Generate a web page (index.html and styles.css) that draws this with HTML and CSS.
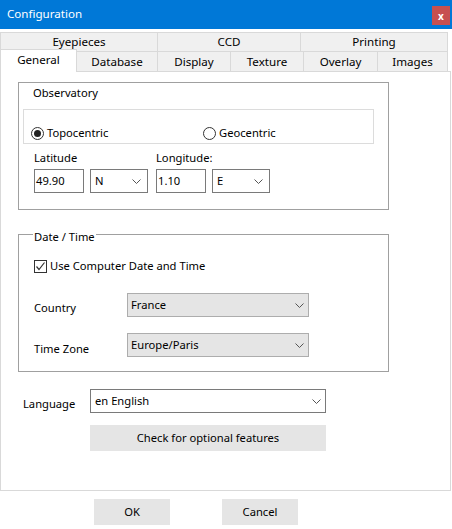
FILE: index.html
```html
<!DOCTYPE html>
<html lang="en">
<head>
  <meta charset="UTF-8">
  <title>Configuration</title>
  <link rel="stylesheet" href="styles.css">
</head>
<body>
  <div class="window">
    <!-- Title bar -->
    <div class="titlebar">
      <span class="title">Configuration</span>
      <span class="close">x</span>
    </div>

    <!-- Tabs (two rows) -->
    <div class="tabs">
      <div class="tab-row row-top">
        <div class="tab first">Eyepieces</div>
        <div class="tab">CCD</div>
        <div class="tab">Printing</div>
      </div>
      <div class="tab-row row-bottom">
        <div class="tab first selected">General</div>
        <div class="tab">Database</div>
        <div class="tab">Display</div>
        <div class="tab">Texture</div>
        <div class="tab">Overlay</div>
        <div class="tab">Images</div>
      </div>
    </div>

    <!-- General page -->
    <div class="panel">
      <div class="group observatory">
        <div class="group-title">Observatory</div>
        <div class="radio-box">
          <label class="radio-item wide"><span class="radio checked"></span>Topocentric</label>
          <label class="radio-item"><span class="radio"></span>Geocentric</label>
        </div>
        <div class="coords">
          <div class="coord lat">
            <div class="coord-label">Latitude</div>
            <div class="coord-inputs">
              <div class="textbox">49.90</div>
              <div class="combo small"><span>N</span><svg class="chevron" width="9" height="5" viewBox="0 0 9 5"><polyline points="0.5,0.5 4.5,4.5 8.5,0.5"/></svg></div>
            </div>
          </div>
          <div class="coord">
            <div class="coord-label">Longitude:</div>
            <div class="coord-inputs">
              <div class="textbox">1.10</div>
              <div class="combo small"><span>E</span><svg class="chevron" width="9" height="5" viewBox="0 0 9 5"><polyline points="0.5,0.5 4.5,4.5 8.5,0.5"/></svg></div>
            </div>
          </div>
        </div>
      </div>

      <div class="group datetime">
        <div class="legend">Date / Time</div>
        <label class="check-row">
          <span class="checkbox"><svg width="11" height="11" viewBox="0 0 11 11"><polyline points="1.5,5.5 4,8.5 9.5,1.5"/></svg></span>
          Use Computer Date and Time
        </label>
        <div class="form-row">
          <span class="form-label">Country</span>
          <div class="combo flat"><span>France</span><svg class="chevron" width="9" height="5" viewBox="0 0 9 5"><polyline points="0.5,0.5 4.5,4.5 8.5,0.5"/></svg></div>
        </div>
        <div class="form-row">
          <span class="form-label">Time Zone</span>
          <div class="combo flat"><span>Europe/Paris</span><svg class="chevron" width="9" height="5" viewBox="0 0 9 5"><polyline points="0.5,0.5 4.5,4.5 8.5,0.5"/></svg></div>
        </div>
      </div>

      <div class="language-row">
        <span class="language-label">Language</span>
        <div class="combo language"><span>en English</span><svg class="chevron" width="9" height="5" viewBox="0 0 9 5"><polyline points="0.5,0.5 4.5,4.5 8.5,0.5"/></svg></div>
      </div>
      <button class="btn features">Check for optional features</button>
    </div>

    <!-- Dialog buttons -->
    <div class="dialog-buttons">
      <button class="btn dialog">OK</button>
      <button class="btn dialog">Cancel</button>
    </div>
  </div>
</body>
</html>
```

FILE: styles.css
```css
* {
  box-sizing: border-box;
  margin: 0;
  padding: 0;
}

body {
  font-family: "Noto Sans", "Open Sans", sans-serif;
  font-size: 11.2px;
  color: #000;
  background: #fff;
}

.window {
  width: 452px;
  height: 529px;
  background: #fff;
}

/* Title bar */
.titlebar {
  height: 29px;
  background-color: #0078d7;
  color: #fff;
  display: flex;
  align-items: center;
  justify-content: space-between;
  padding: 0 2px 0 7px;
}

.title {
  font-size: 11.6px;
  line-height: 16px;
  margin-top: -1px;
}

.close {
  width: 18px;
  height: 19px;
  margin-top: 2px;
  background-color: #c75050;
  color: #fff;
  font-size: 10px;
  font-weight: bold;
  display: flex;
  align-items: center;
  justify-content: center;
}

/* Tabs */
.tabs {
  padding-top: 3px;
}

.tab-row {
  display: grid;
  width: 448px;
}

.row-top {
  grid-template-columns: 158px 143px 147px;
  height: 19px;
}

.row-bottom {
  grid-template-columns: 77px 81px 73px 73px 74px 70px;
  height: 20px;
}

.tab {
  background-color: #f0f0f0;
  border-top: 1px solid #d9d9d9;
  border-right: 1px solid #d9d9d9;
  display: flex;
  align-items: center;
  justify-content: center;
  line-height: 16px;
  font-size: 11.6px;
}

.tab.first {
  border-left: 1px solid #d9d9d9;
}

.tab.selected {
  position: relative;
  z-index: 1;
  background-color: #fff;
  margin-top: -2px;
  margin-bottom: -1px;
  padding-bottom: 2px;
}

/* Page */
.panel {
  width: 451px;
  height: 420px;
  border: 1px solid #d9d9d9;
  padding: 10px 0 0 17px;
}

.group {
  width: 371px;
  border: 1px solid #a0a0a0;
}

.observatory {
  padding: 2px 0 16px 4px;
}

.group-title {
  line-height: 16px;
  margin-left: 10px;
}

.radio-box {
  width: 351px;
  height: 35px;
  margin-top: 8px;
  border: 1px solid #dcdcdc;
  display: flex;
  align-items: flex-end;
  padding: 0 0 2px 7px;
}

.radio-item {
  display: flex;
  align-items: center;
  line-height: 16px;
}

.radio-item.wide {
  width: 172px;
}

.radio {
  width: 13px;
  height: 13px;
  border: 1px solid #333;
  border-radius: 50%;
  margin-right: 3px;
  display: flex;
  align-items: center;
  justify-content: center;
}

.radio.checked::after {
  content: "";
  width: 7px;
  height: 7px;
  border-radius: 50%;
  background-color: #222;
}

.coords {
  display: flex;
  gap: 8px;
  margin: 6px 0 0 11px;
}

.coord.lat {
  width: 114px;
}

.coord-label {
  line-height: 16px;
}

.coord-inputs {
  display: flex;
  gap: 6px;
  margin-top: 3px;
}

.textbox {
  width: 50px;
  height: 24px;
  border: 1px solid #7a7a7a;
  padding-left: 1px;
  line-height: 22px;
}

.combo {
  height: 24px;
  border: 1px solid #7a7a7a;
  display: flex;
  align-items: center;
  justify-content: space-between;
  padding: 0 4px 0 4px;
  line-height: 16px;
}

.combo.small {
  width: 58px;
  padding-right: 6px;
}

.combo.flat {
  width: 182px;
  background-color: #e5e5e5;
  border-color: #adadad;
  padding-left: 3px;
}

.combo.language {
  width: 236px;
}

.chevron {
  fill: none;
  stroke: #555;
  stroke-width: 1;
}

/* Date / Time group */
.datetime {
  margin-top: 24px;
  padding: 0 0 14px 15px;
}

.legend {
  width: fit-content;
  margin: -5px 0 0 -1px;
  padding: 0 1px;
  background: #fff;
  line-height: 14px;
}

.check-row {
  display: flex;
  align-items: center;
  line-height: 16px;
  margin-top: 14px;
}

.checkbox {
  width: 13px;
  height: 13px;
  border: 1px solid #333;
  margin-right: 3px;
  display: flex;
  align-items: center;
  justify-content: center;
}

.checkbox svg {
  fill: none;
  stroke: #333;
  stroke-width: 1.2;
}

.form-row {
  display: flex;
  align-items: center;
  margin-top: 19px;
}

.form-row + .form-row {
  margin-top: 16px;
}

.form-label {
  width: 93px;
  padding-top: 5px;
  line-height: 16px;
}

.form-row + .form-row .form-label {
  padding-top: 7px;
}

/* Language + features */
.language-row {
  display: flex;
  align-items: center;
  margin-top: 17px;
}

.language-label {
  width: 67px;
  margin-left: 5px;
  padding-top: 5px;
  line-height: 16px;
}

.btn {
  font-family: inherit;
  font-size: 11.2px;
  color: #000;
  background-color: #e5e5e5;
  border: none;
  line-height: 16px;
}

.btn.features {
  display: block;
  width: 236px;
  height: 26px;
  margin: 12px 0 0 72px;
}

.dialog-buttons {
  display: flex;
  gap: 52px;
  padding: 8px 0 0 94px;
}

.btn.dialog {
  width: 76px;
  height: 26px;
}
```
